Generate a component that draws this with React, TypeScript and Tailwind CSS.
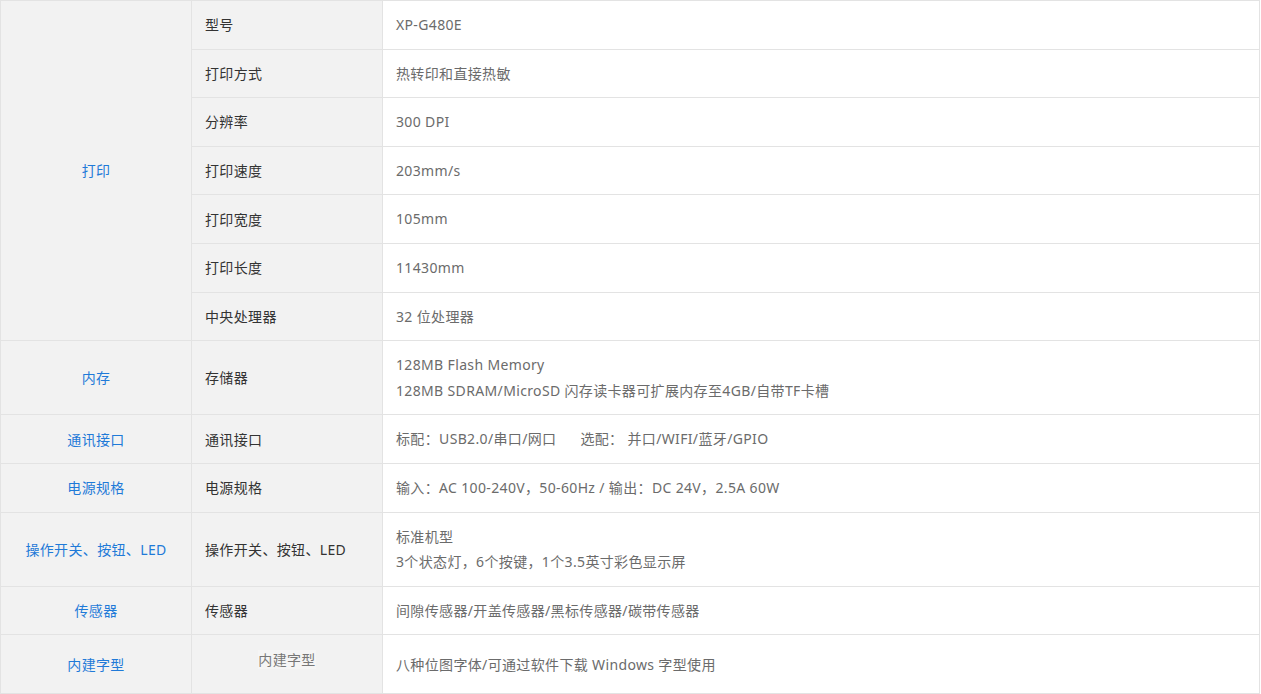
const rows: { group?: { label: string; span: number }; name: string; values: string[] }[] = [
  { group: { label: '打印', span: 7 }, name: '型号', values: ['XP-G480E'] },
  { name: '打印方式', values: ['热转印和直接热敏'] },
  { name: '分辨率', values: ['300 DPI'] },
  { name: '打印速度', values: ['203mm/s'] },
  { name: '打印宽度', values: ['105mm'] },
  { name: '打印长度', values: ['11430mm'] },
  { name: '中央处理器', values: ['32 位处理器'] },
  {
    group: { label: '内存', span: 1 },
    name: '存储器',
    values: ['128MB Flash Memory', '128MB SDRAM/MicroSD 闪存读卡器可扩展内存至4GB/自带TF卡槽'],
  },
  {
    group: { label: '通讯接口', span: 1 },
    name: '通讯接口',
    values: ['标配：USB2.0/串口/网口\u00a0\u00a0\u00a0\u00a0\u00a0\u00a0选配： 并口/WIFI/蓝牙/GPIO'],
  },
  {
    group: { label: '电源规格', span: 1 },
    name: '电源规格',
    values: ['输入：AC 100-240V，50-60Hz / 输出：DC 24V，2.5A 60W'],
  },
  {
    group: { label: '操作开关、按钮、LED', span: 1 },
    name: '操作开关、按钮、LED',
    values: ['标准机型', '3个状态灯，6个按键，1个3.5英寸彩色显示屏'],
  },
  { group: { label: '传感器', span: 1 }, name: '传感器', values: ['间隙传感器/开盖传感器/黑标传感器/碳带传感器'] },
];

export default function App() {
  return (
    <div
      className="w-[1261px] bg-white text-[14px] tracking-[0.35px]"
      style={{ fontFamily: '"Noto Sans", "Noto Sans CJK SC", sans-serif' }}
    >
      <table className="w-[1260px] table-fixed border-collapse">
        <colgroup>
          <col className="w-[191px]" />
          <col className="w-[191px]" />
          <col />
        </colgroup>
        <tbody>
          {rows.map((row) => (
            <tr key={row.name}>
              {row.group && (
                <td
                  rowSpan={row.group.span}
                  className="border border-[#e3e3e3] bg-[#f2f2f2] text-center align-middle text-[#1f7ad8]"
                >
                  {row.group.label}
                </td>
              )}
              <td className="border border-[#e3e3e3] bg-[#f2f2f2] px-[13px] align-middle text-[#333]">
                {row.name}
              </td>
              <td className="border border-[#e3e3e3] bg-white px-[13px] py-[11px] align-middle leading-[25.6px] text-[#6b6b6b]">
                {row.values.map((v) => (
                  <div key={v}>{v}</div>
                ))}
              </td>
            </tr>
          ))}
          <tr className="h-[59px]">
            <td className="border border-[#e3e3e3] bg-[#f2f2f2] text-center align-middle text-[#1f7ad8]">
              内建字型
            </td>
            <td className="border border-[#e3e3e3] bg-[#f2f2f2] pb-[10px] text-center align-middle text-[#777]">
              <span className="bg-[#f5f5f5]">内建字型</span>
            </td>
            <td className="border border-[#e3e3e3] bg-white px-[13px] align-middle text-[#6b6b6b]">
              八种位图字体/可通过软件下载 Windows 字型使用
            </td>
          </tr>
        </tbody>
      </table>
    </div>
  );
}
